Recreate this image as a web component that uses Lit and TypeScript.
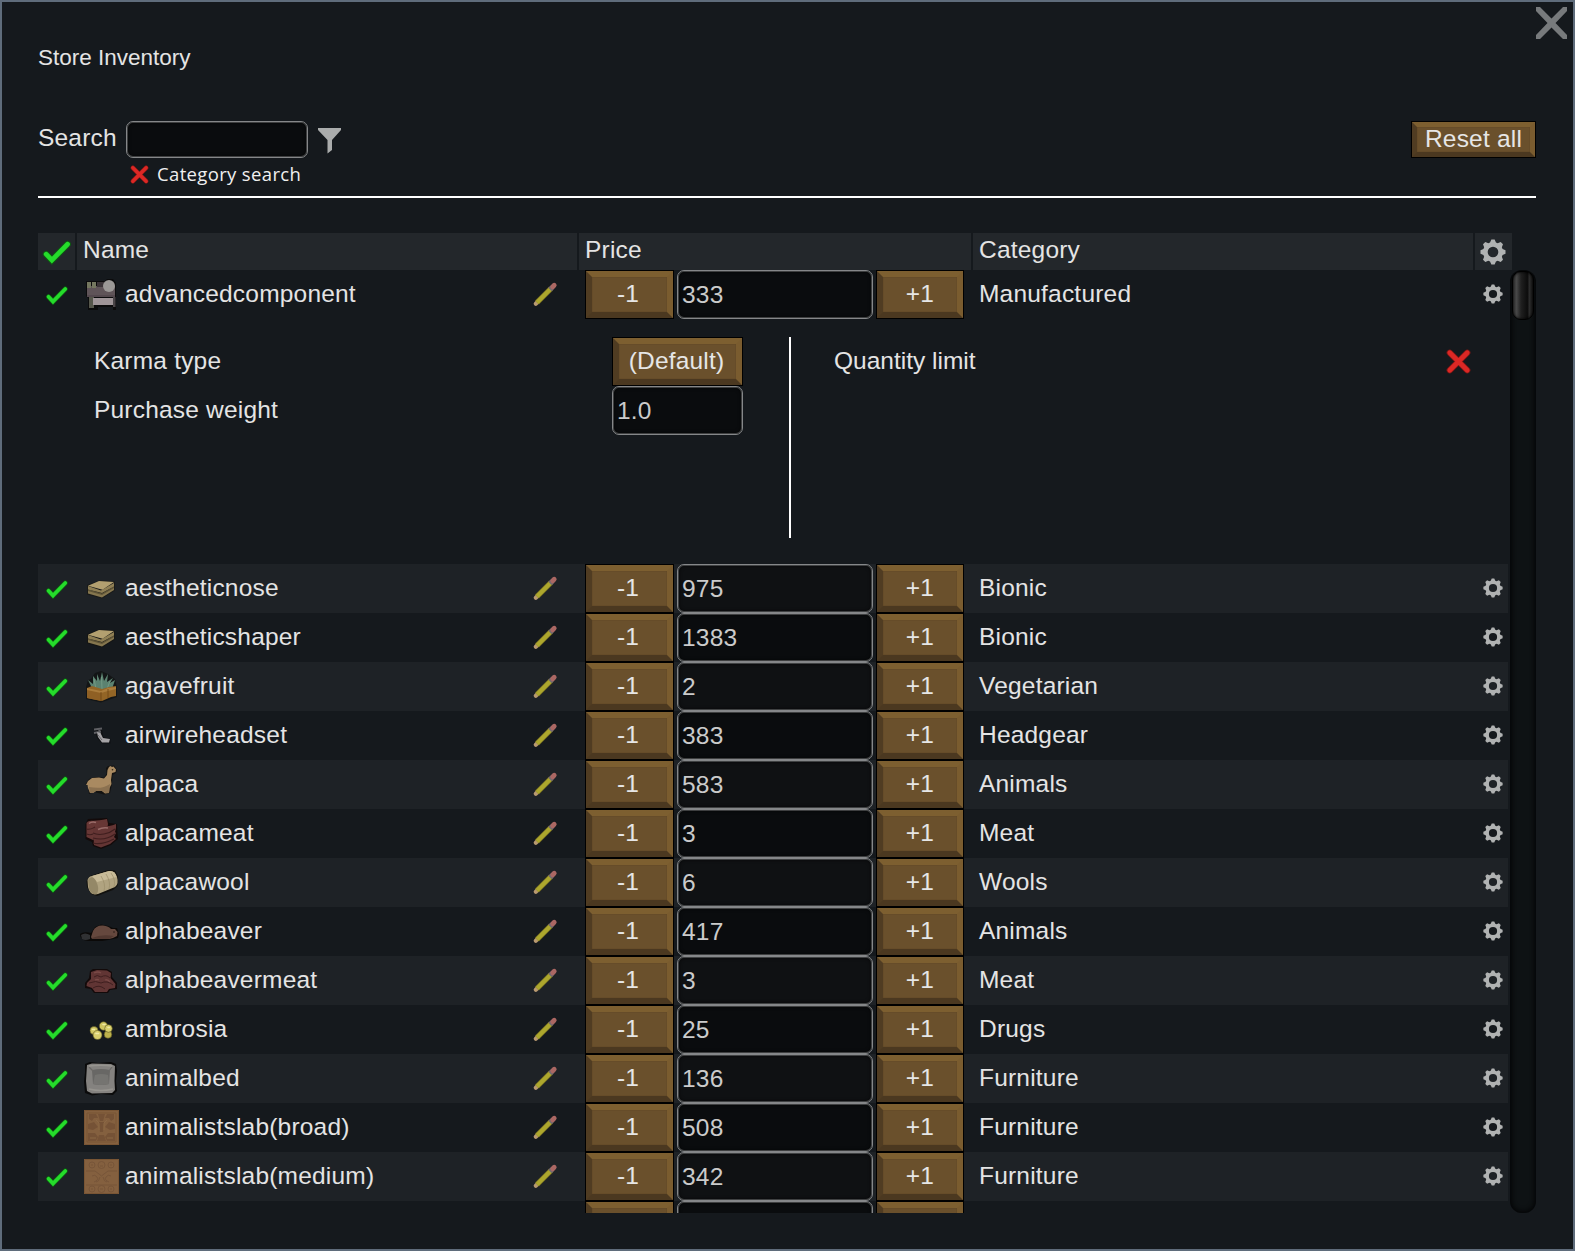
import { LitElement, html, svg, css, SVGTemplateResult } from "lit";
import { customElement, property } from "lit/decorators.js";
import { classMap } from "lit/directives/class-map.js";

interface Item {
  name: string;
  price: string;
  category: string;
  icon: string;
}

const ITEMS: Item[] = [
  { name: "advancedcomponent", price: "333", category: "Manufactured", icon: "component" },
  { name: "aestheticnose", price: "975", category: "Bionic", icon: "bionic" },
  { name: "aestheticshaper", price: "1383", category: "Bionic", icon: "bionic" },
  { name: "agavefruit", price: "2", category: "Vegetarian", icon: "agave" },
  { name: "airwireheadset", price: "383", category: "Headgear", icon: "headset" },
  { name: "alpaca", price: "583", category: "Animals", icon: "alpaca" },
  { name: "alpacameat", price: "3", category: "Meat", icon: "meat" },
  { name: "alpacawool", price: "6", category: "Wools", icon: "wool" },
  { name: "alphabeaver", price: "417", category: "Animals", icon: "beaver" },
  { name: "alphabeavermeat", price: "3", category: "Meat", icon: "meat2" },
  { name: "ambrosia", price: "25", category: "Drugs", icon: "ambrosia" },
  { name: "animalbed", price: "136", category: "Furniture", icon: "bed" },
  { name: "animalistslab(broad)", price: "508", category: "Furniture", icon: "slabBroad" },
  { name: "animalistslab(medium)", price: "342", category: "Furniture", icon: "slabMedium" },
];

const ART: Record<string, SVGTemplateResult> = {
  component: svg`
    <path d="M2 4h19l2-2h6l3 4v27h-3v-3H14v3H4V21L2 19Z" fill="#0b0b0c"/>
    <path d="M3 9h28v10H3Z" fill="#5f5458"/>
    <path d="M3 5h4v6H3Z M8 5h4v6H8Z" fill="#74775f"/>
    <path d="M13 5h7v5h-7Z" fill="#3b3438"/>
    <path d="M5 20h5v11H5Z" fill="#55564b"/>
    <path d="M3 18h28v2H3Z" fill="#54494e"/>
    <path d="M9 21h20v7H9Z" fill="#9f9598"/>
    <path d="M29 20h2.500v10H29Z" fill="#4a4548"/>
    <circle cx="25" cy="9" r="6" fill="#9b9896"/>`,
  bionic: svg`
    <path d="M3 14 16 9.500 31 10.500v9L18 27.500 3 23.500Z" fill="#14120c" opacity=".5"/>
    <path d="M4 19 18 23 30 16v3L18 26.500 4 22.500Z" fill="#85764e"/>
    <path d="M4 18.500 18 22.500 30 15.500v1.500L18 24 4 20Z" fill="#5f5436"/>
    <path d="M4 15 17 19.500 30 12v3.500L18 22 4 18.500Z" fill="#8f7f54"/>
    <path d="M4 14.800 15 10 30 11 18.500 18.700Z" fill="#b3a070"/>`,
  agave: svg`
    <path d="M2 18 4 11 7 10 11 4 17 2 24 5 31 10 33 18V28L17 33.500 2 30Z" fill="#0b0d0c" opacity=".6"/>
    <path d="M8 19 4 11 9 15 9 7 13 12 13 5 16 12 18 3 20 12 24 5 23 13 29 9 26 14 31 11 28 20 18 23Z" fill="#5b8270"/>
    <path d="M12 20 10 10 M18 20 17.500 8 M23 20 26 12" stroke="#739a84" stroke-width="1" fill="none"/>
    <path d="M3 19 8 17 18 20 25 18 32 17V27L27 28 18 32 3 29Z" fill="#936526"/>
    <path d="M3 19 17 22V32L3 29Z" fill="#8f6024"/>
    <path d="M3 19 17 22 24 19 32 18V20L24 22 17 24 3 21Z" fill="#ab7d3c"/>
    <path d="M24 20v9M17 23v9" stroke="#6c4515" stroke-width=".8" fill="none"/>`,
  headset: svg`
    <path d="M9.500 10h8l2 9 7 2v4.500H18L13 20Z" fill="#0c0c0e" opacity=".6"/>
    <path d="M10 11.500 18 10.500M10 15 17 13.500M15 10.500 16 18" stroke="#5f6064" stroke-width="1.800" fill="none"/>
    <path d="M13 14 16.500 15 19 20 26 21 25 24.500 18 24.500 14 19Z" fill="#a4a2a5"/>
    <path d="M14 17 18 22" stroke="#68686c" stroke-width="1"/>`,
  alpaca: svg`
    <path d="M1.500 17 5 12 11 10 20 10.500 22.500 7 22 1 24-1 30-1.500 33 3 32 6 28.500 8 28 17 26 26 20 27.500 10 25 5 27 4 19Z" fill="#0e0b08" opacity=".7"/>
    <path d="M2 18 4 14 8 11 15 10.500 20 11.500 23 8 23.500 3 25 0 26.500-1 28 0 29.500-.500 32 2.500 31.500 5 28 6 27 13 27.500 17 25.500 21 25 26 21 26.500 18 24 12 24 9 26 6 26 4 21 3.500 18Z" fill="#a98a61"/>
    <path d="M5 20C12 21 19 22 26 17L25 26H21L18 24H12L9 26H6Z" fill="#8b7150"/>
    <circle cx="28.500" cy="2.800" r=".8" fill="#33271a"/>`,
  meat: svg`
    <path d="M1.500 8 4 3 23 2 25 7 33 8 33.500 17 34 23 27 29 17 33 9 30 8 26 1.500 23Z" fill="#130a0a"/>
    <path d="M2.500 7C5 3 12 6 23 3L24 8 23 14 9 24 2.500 21Z" fill="#673735"/>
    <path d="M9 13C13 9 23 12 32 8L32 12 31 16 32 17 30 21 32 23 26 28 17 31.500 10 29Z" fill="#643534"/>
    <path d="M2.500 13C7 14 9 12 11 11M2.500 18C5 19 7 19 9 18M9 17C15 20 25 18 31 13M9 22C16 24 24 23 31 18M9 27C16 29 22 27 30 23" stroke="#3f1e1e" stroke-width="1.100" fill="none"/>
    <path d="M5 7.500Q8 5 12 6.500M14 13.500Q19 11 24 12" stroke="#9a6c69" stroke-width="1.500" fill="none"/>`,
  wool: svg`
    <path d="M2.500 16 6 11 24 5 31 5.500 34 11 33.500 21 29 25 13 31 7 29 3 22Z" fill="#0e0c08" opacity=".8"/>
    <path d="M3.500 15Q5 11 8 11L25 6Q31 5 33 12T31 22L14 29Q6 31 4 22Z" fill="#b0a380"/>
    <path d="M8 11 25 6Q31 5 32.500 12L13 17Z" fill="#c8bb98"/>
    <path d="M4 15Q8 9 12 16Q16 24 13 29Q8 31 5 24Z" fill="#948867"/>
    <path d="M17 11Q22 19 20 26M22 9Q27 17 25 24M27 8Q32 15 30 22" stroke="#9a8c69" stroke-width=".7" fill="none"/>`,
  beaver: svg`
    <path d="M-4 20Q0 17 7 19L11 13 17 10.500 24 12 29 14 33 14 35 20 34 24 24 26 18 27 4 27Q-4 26-4 20Z" fill="#0b0908"/>
    <path d="M-3 21Q1 18 6 21V25Q1 27-2 25Z" fill="#303133"/>
    <path d="M7 23 9 17Q12 11 19 11.500Q25 12 27 15L31 15 33.500 18 33 22 29 24 25 25H8Z" fill="#65483e"/>
    <path d="M8 24Q17 20 30 22L25 25H8Z" fill="#523931"/>
    <circle cx="30" cy="18" r=".7" fill="#1b100d"/>`,
  meat2: svg`
    <path d="M6 8 9 6 23 6 28 9 28 14 33 20 33 26 26 27 24 30 10 30 7 26 1 25 1 20 5 15Z" fill="#130a0a"/>
    <path d="M7 9 13 7 23 7.500 27 10 26.500 15 31.500 21 31 25 25 26 23 29 11 29 8 25 2.500 23 3 20 7 16Z" fill="#613534"/>
    <path d="M10 14Q13 11 17 14Q22 11 26 15M5 20Q12 17 17 20Q23 17 29 22M9 25Q15 21 21 26" stroke="#3f1f1f" stroke-width="1" fill="none"/>
    <path d="M10 10Q14 8 17 10M11 17Q13 16 15 17M21 17Q24 16 26 19" stroke="#7a4a47" stroke-width="1.300" fill="none"/>`,
  ambrosia: svg`
    <g stroke="#57521f" stroke-width=".6">
      <circle cx="24" cy="22.500" r="3.800" fill="#bdb24c"/>
      <circle cx="19.500" cy="14" r="4.200" fill="#cfc560"/>
      <circle cx="24.500" cy="16.500" r="3.800" fill="#d8cf6a"/>
      <circle cx="10" cy="18.500" r="4" fill="#d0c662"/>
      <circle cx="13.500" cy="23" r="4.500" fill="#d9cf6e"/>
    </g>
    <path d="M8.500 17.500h2M12 21.500h2.500M19 12.500h2M24 15.500h1.500" stroke="#efe9a6" stroke-width="1.600" stroke-linecap="round"/>`,
  bed: svg`
    <path d="M1 3 6 1 14 2 27 1 32 3 33 10 32 20 33 30 29 34 17 33 8 34.500 1 32 0 20 1 12Z" fill="#0a0a0a"/>
    <path d="M3 4 8 2.500 27 3 31 5 30.500 20 31 29 28 32 8 32.500 3 30 2 20Z" fill="#84827f"/>
    <path d="M8 9Q17 7 26 9L25 23Q17 25 9 23Z" fill="#686765"/>
    <path d="M11 14Q17 12 24 14L25 23Q17 25 9 23Z" fill="#757471"/>
    <path d="M5 6 9 10M28 6 25 10" stroke="#6b6967" stroke-width="1.200"/>
    <path d="M5 28Q17 31 29 28M5 5Q17 3.500 28 5" stroke="#96948f" stroke-width="1.500" fill="none"/>`,
  slabBroad: svg`
    <path d="M0 0h35v35H0Z" fill="#84603f"/>
    <path d="M.5.500h34v34H.5ZM3 3h29v29H3Z" fill="none" stroke="#795534"/>
    <path d="M5 4h7l2 4h-4l-2 3-3-2ZM23 4h7v5l-3 2-2-3h-4ZM14 4h7l-2 7h-3ZM4 14l6-2 4 5-5 3-5-1ZM31 14l-6-2-4 5 5 3 5-1ZM15 12h5l-1 10h-3ZM4 23h7l3 4-2 4H4ZM31 23h-7l-3 4 2 4h8ZM15 25h5l2 6h-9Z" fill="#755236"/>
    <path d="M12 10 15 13V20M23 10 20 13V20M6 28h6M23 28h6" stroke="#8b6845" fill="none"/>`,
  slabMedium: svg`
    <path d="M0 0h35v35H0Z" fill="#84603f"/>
    <path d="M.5.500h34v34H.5Z" fill="none" stroke="#795534"/>
    <g fill="none" stroke="#775539">
      <circle cx="8" cy="6" r="3"/><circle cx="17.500" cy="6" r="3.500"/><circle cx="27" cy="6" r="3"/>
      <circle cx="8" cy="30" r="3"/><circle cx="17.500" cy="30" r="3.500"/><circle cx="27" cy="30" r="3"/>
      <path d="M2 12h9l4 3 2.500 2 2.500-2 4-3h9M8 17q3-2 5 1t-3 5M27 17q-3-2-5 1t3 5M12 23q3 0 4-5M23 23q-3 0-4-5M2 26h31"/>
      <path d="M7 6h2M16 7h3M26 6h2M7 30h2M16 30h3M26 30h2"/>
    </g>`,
};

/* Eight short teeth set on a thick ring. */
const gear = (cls: string) => {
  const pts: string[] = [];
  for (let i = 0; i < 8; i++) {
    const c = (i * Math.PI) / 4;
    for (const [off, r] of [[-0.3, 7.7], [-0.13, 9.7], [0.13, 9.7], [0.3, 7.7]]) {
      pts.push(`${(10 + r * Math.sin(c + off)).toFixed(2)} ${(10 - r * Math.cos(c + off)).toFixed(2)}`);
    }
  }
  const d = `M${pts.join("L")}ZM10 5.900a4.100 4.100 0 1 0 0 8.200a4.100 4.100 0 1 0 0-8.200Z`;
  return html`<svg class=${cls} viewBox="0 0 20 20"><path d=${d} fill="#b0b2b2" fill-rule="evenodd"/></svg>`;
};

const check = (cls: string) => html`
  <svg class=${cls} viewBox="0 0 22 19">
    <path d="M2.500 10.800 7 15.500 19.300 3" fill="none" stroke="#0e5a12" stroke-width="5.200" stroke-linecap="round"/>
    <path d="M2.500 10.800 7 15.500 19.300 3" fill="none" stroke="#25dc2b" stroke-width="3.700" stroke-linecap="round"/>
  </svg>`;

const cross = (cls: string) => html`
  <svg class=${cls} viewBox="0 0 20 20">
    <path d="M3 3 17 17M17 3 3 17" fill="none" stroke="#7d1715" stroke-width="5" stroke-linecap="round"/>
    <path d="M3 3 17 17M17 3 3 17" fill="none" stroke="#dc2825" stroke-width="3.700" stroke-linecap="round"/>
  </svg>`;

const pencil = html`
  <svg class="pencil" viewBox="0 0 24 24">
    <path d="M2.800 21.700 5 19.500" stroke="#b99a70" stroke-width="4.200" stroke-linecap="round"/>
    <path d="M4 20.500 18 6.500" stroke="#6e6a22" stroke-width="5.400"/>
    <path d="M4 20.500 18 6.500" stroke="#ada72d" stroke-width="4.200"/>
    <path d="M17 7.500 19.500 5" stroke="#756a70" stroke-width="5"/>
    <path d="M19.800 4.700 21.200 3.300" stroke="#ab6763" stroke-width="4.800" stroke-linecap="round"/>
  </svg>`;

const controls = css`
  :host { box-sizing: border-box; }
  * { box-sizing: border-box; }
  svg { display: block; flex: none; overflow: visible; }
  .btn {
    display: flex; align-items: center; justify-content: center;
    border: 1px solid #000;
    height: 49px;
    background: #6a502c;
    color: #e6e6e6;
    white-space: nowrap;
  }
  .face {
    display: flex; align-items: center; justify-content: center;
    width: 100%; height: 100%;
    border: 6px solid;
    border-color: #7d5f30 #7a5c2f #4b3820 #503c22;
    box-shadow: inset 0 0 1px rgba(40, 28, 10, .5);
    padding-bottom: 2px;
  }
  .btn.short .face { border-width: 5px; }
  .btn.short { height: 37px; }
  .field {
    display: flex; align-items: center;
    height: 49px;
    padding: 0 0 0 4px;
    border: 1px solid #858789;
    border-radius: 7px;
    background: rgba(0, 0, 0, .5);
    box-shadow: inset 0 0 0 1px rgba(130, 132, 134, .45), inset 0 0 4px #000;
    color: #cbcbcb;
  }
`;

@customElement("store-row")
class StoreRow extends LitElement {
  @property({ attribute: false }) item?: Item;

  static styles = [controls, css`
    :host { display: flex; align-items: center; height: 49px; width: 1470px; flex: none; }
    .toggle { width: 46px; flex: none; padding: 2px 0 0 8px; }
    .check { width: 22px; height: 19px; }
    .art { width: 35px; height: 35px; }
    .name { width: 405px; flex: none; padding-left: 6px; white-space: nowrap; line-height: 28px; padding-bottom: 2px; }
    .pencil { width: 24px; height: 24px; margin: 0 28px 2px 9px; }
    .minus { width: 89px; flex: none; }
    .minus .face { padding-right: 3px; }
    .price { width: 196px; flex: none; margin: 0 3px; }
    .plus { width: 88px; flex: none; }
    .category { flex: 1; padding-left: 15px; padding-bottom: 2px; white-space: nowrap; line-height: 28px; }
    .gear { width: 20px; height: 20px; margin: 0 5px 2px 0; }
    .spacer { width: 547px; flex: none; }
  `];

  render() {
    const it = this.item;
    if (!it) {
      return html`
        <div class="spacer"></div>
        <div class="btn minus"><div class="face"></div></div>
        <div class="field price"></div>
        <div class="btn plus"><div class="face"></div></div>`;
    }
    return html`
      <div class="toggle">${check("check")}</div>
      <svg class="art" viewBox="0 0 35 35">${ART[it.icon]}</svg>
      <div class="name">${it.name}</div>
      ${pencil}
      <div class="btn minus"><div class="face">-1</div></div>
      <div class="field price">${it.price}</div>
      <div class="btn plus"><div class="face">+1</div></div>
      <div class="category">${it.category}</div>
      ${gear("gear")}`;
  }
}

@customElement("app-root")
class AppRoot extends LitElement {
  static styles = [controls, css`
    :host {
      display: flex; flex-direction: column; position: relative;
      width: 1575px; height: 1251px; overflow: hidden;
      padding: 0 37px 36px 36px;
      border: 2px solid #5f6c7b;
      background: #15191d;
      color: #e4e4e4;
      font: 24.5px/28px "Liberation Sans", Arial, sans-serif;
      letter-spacing: .2px;
    }
    .close { position: absolute; top: 5px; right: 6px; width: 31px; height: 32px; }
    .title { padding-top: 42px; height: 119px; flex: none; font-size: 22.500px; letter-spacing: 0; }
    .tools { display: flex; height: 37px; flex: none; }
    .label { width: 88px; padding-top: 3px; }
    .search { width: 182px; height: 37px; }
    .filter { width: 24px; height: 26px; margin: 7px auto 0 10px; }
    .reset { width: 125px; }
    .option { display: flex; align-items: center; height: 38px; flex: none; padding: 0 0 5px 92px; gap: 8px;
      font-family: "Open Sans", sans-serif; font-size: 18.500px; letter-spacing: .35px; color: #f0f0f0; }
    .option span { padding-bottom: 2px; }
    .small-x { width: 19px; height: 19px; }
    .rule { height: 2px; background: #fff; flex: none; }
    .head { display: flex; gap: 2px; height: 37px; margin-top: 35px; flex: none; }
    .cell { display: flex; align-items: center; background: #23272b; padding: 0 0 3px 6px; }
    .c-check { width: 37px; padding: 2px 0 0 5px; }
    .c-name { width: 500px; }
    .c-price { width: 392px; }
    .c-cat { width: 500px; }
    .c-gear { width: 37px; padding: 0 0 0 5px; }
    .check-lg { width: 28px; height: 25px; }
    .gear-lg { width: 26px; height: 26px; }
    .body { display: flex; justify-content: space-between; height: 943px; flex: none; overflow: hidden; }
    .list { display: flex; flex-direction: column; width: 1470px; }
    .row.alt { background: #1e2226; }
    .details { display: flex; height: 245px; flex: none; padding-top: 18px; }
    .left { width: 751px; height: 201px; padding-left: 56px; }
    .pair { display: flex; width: 649px; justify-content: space-between; line-height: 47px; }
    .w { width: 131px; flex: none; }
    .w .face { padding-right: 2px; }
    .divider { width: 2px; height: 201px; background: #fff; }
    .right { display: flex; justify-content: space-between; flex: 1; padding: 0 37px 0 43px; line-height: 47px; }
    .right span { letter-spacing: 0; }
    .x { width: 25px; height: 25px; margin-top: 12px; }
    .track {
      width: 26px; height: 943px; padding: 1px 2px; border-radius: 12px;
      background: #0e1214; box-shadow: inset 0 0 4px 2px #050607;
    }
    .thumb {
      height: 49px; border: 1px solid #000; border-radius: 9px;
      background: linear-gradient(90deg, #343434, #484848 18%, #202020 40%, #0c0c0c 72%, #2c2c2c 82%, #151515);
      box-shadow: inset 0 0 3px #000;
    }
  `];

  render() {
    const [first, ...rest] = ITEMS;
    return html`
      <svg class="close" viewBox="0 0 31 32">
        <path d="M0 0H4L15.500 11.500 27 0H31V4L19.500 16 31 28V32H27L15.500 20.500 4 32H0V28L11.500 16 0 4Z" fill="#777a7c"/>
      </svg>
      <div class="title">Store Inventory</div>
      <div class="tools">
        <div class="label">Search</div>
        <div class="field search"></div>
        <svg class="filter" viewBox="0 0 24 26"><path d="M0 0H23V2L14 12V22L9.500 25.500V12L0 2Z" fill="#aaacac"/></svg>
        <div class="btn short reset"><div class="face">Reset all</div></div>
      </div>
      <div class="option">${cross("small-x")}<span>Category search</span></div>
      <div class="rule"></div>
      <div class="head">
        <div class="cell c-check">${check("check-lg")}</div>
        <div class="cell c-name">Name</div>
        <div class="cell c-price">Price</div>
        <div class="cell c-cat">Category</div>
        <div class="cell c-gear">${gear("gear-lg")}</div>
      </div>
      <div class="body">
        <div class="list">
          <store-row class="row" .item=${first}></store-row>
          <div class="details">
            <div class="left">
              <div class="pair"><span>Karma type</span><div class="btn w"><div class="face">(Default)</div></div></div>
              <div class="pair"><span>Purchase weight</span><div class="field w">1.0</div></div>
            </div>
            <div class="divider"></div>
            <div class="right"><span>Quantity limit</span>${cross("x")}</div>
          </div>
          ${rest.map((it, i) => html`
            <store-row class=${classMap({ row: true, alt: i % 2 === 0 })} .item=${it}></store-row>`)}
          <store-row class="row"></store-row>
        </div>
        <div class="track"><div class="thumb"></div></div>
      </div>`;
  }
}
